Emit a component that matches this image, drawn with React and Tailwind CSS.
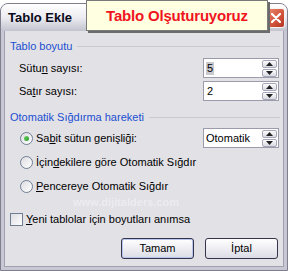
import React from "react";

const Spinner = () => (
  <div className="flex flex-col gap-[1px] w-[15px] mr-[1px]">
    {["up", "down"].map((dir) => (
      <div
        key={dir}
        className="h-[8px] flex items-center justify-center border border-[#a7a7b7] rounded-[2px] bg-gradient-to-b from-[#fdfdfe] to-[#d9d9e2]"
      >
        <svg width="7" height="4" viewBox="0 0 7 4">
          {dir === "up" ? (
            <path d="M0 4 L3.5 0 L7 4 Z" fill="#222" />
          ) : (
            <path d="M0 0 L3.5 4 L7 0 Z" fill="#222" />
          )}
        </svg>
      </div>
    ))}
  </div>
);

const Field = ({ children }) => (
  <div className="ml-auto w-[76px] h-[20px] flex items-center border border-[#9b9bab] bg-white pl-[2px]">
    <div className="flex-1 flex items-center">{children}</div>
    <Spinner />
  </div>
);

const Radio = ({ checked }) => (
  <div className="w-[13px] h-[13px] rounded-full border border-[#6f7f93] bg-gradient-to-br from-[#dcdce2] to-[#ffffff] flex items-center justify-center">
    {checked && (
      <div className="w-[5px] h-[5px] rounded-full bg-gradient-to-br from-[#6ed66e] to-[#1f9a1f]" />
    )}
  </div>
);

const GroupTitle = ({ children }) => (
  <div className="flex items-center h-[13px] pr-[3px]">
    <span className="text-[#1b4fd0]">{children}</span>
    <div className="flex-1 h-px bg-[#c9c9cf] ml-[5px]" />
  </div>
);

export default function App() {
  return (
    <div className="w-[288px] h-[271px] bg-white pt-[3px] relative overflow-hidden font-['Liberation_Sans',Arial,sans-serif] text-[11px] text-black leading-[13px]">
      <div className="h-[268px] flex flex-col rounded-t-[8px] border border-[#7e7e8e] bg-[#c8c8d4] overflow-hidden">
        {/* title bar */}
        <div className="h-[27px] flex items-center pl-[7px] pr-[2px] bg-gradient-to-b from-[#ffffff] via-[#ececf1] to-[#c3c3cf]">
          <span className="font-bold text-[13px] text-[#0a0a1a]">Tablo Ekle</span>
          <div className="ml-auto w-[19px] h-[20px] rounded-[3px] border border-[#f4f4f4] bg-gradient-to-br from-[#e88a72] via-[#d65a42] to-[#b6301f] flex items-center justify-center">
            <svg width="10" height="10" viewBox="0 0 10 10">
              <path d="M1 1 L9 9 M9 1 L1 9" stroke="#fff" strokeWidth="2.2" strokeLinecap="round" />
            </svg>
          </div>
        </div>

        {/* body */}
        <div className="relative flex-1 mx-[3px] mb-[3px] border border-t-0 border-[#a1a1b1] bg-[#e2e1e6] pl-[5px] pt-[9px] flex flex-col">
          <GroupTitle>Tablo boyutu</GroupTitle>

          <div className="flex items-center h-[20px] mt-[5px] pl-[9px] pr-[4px]">
            <span>
              Sütu<u>n</u> sayısı:
            </span>
            <Field>
              <span className="bg-[#c8c8cf] px-[1px]">5</span>
            </Field>
          </div>
          <div className="flex items-center h-[20px] mt-[3px] pl-[9px] pr-[4px]">
            <span>
              Sa<u>t</u>ır sayısı:
            </span>
            <Field>
              <span className="px-[1px]">2</span>
            </Field>
          </div>

          <div className="mt-[10px]">
            <GroupTitle>Otomatik Sığdırma hareketi</GroupTitle>
          </div>

          <div className="flex items-center h-[20px] mt-[4px] pl-[10px] pr-[4px]">
            <Radio checked />
            <span className="ml-[3px]">
              Sa<u>b</u>it sütun genişliği:
            </span>
            <Field>
              <span>Otomatik</span>
            </Field>
          </div>
          <div className="flex items-center h-[20px] mt-[4px] pl-[10px]">
            <Radio />
            <span className="ml-[3px]">
              İçin<u>d</u>ekilere göre Otomatik Sığdır
            </span>
          </div>
          <div className="flex items-center h-[20px] mt-[4px] pl-[10px]">
            <Radio />
            <span className="ml-[3px]">
              <u>P</u>encereye Otomatik Sığdır
            </span>
          </div>

          <div className="flex items-center h-[14px] mt-[16px]">
            <div className="w-[13px] h-[13px] border border-[#6f7f93] bg-gradient-to-br from-[#dcdce2] to-[#ffffff]" />
            <span className="ml-[3px]">
              <u>Y</u>eni tablolar için boyutları anımsa
            </span>
          </div>

          <div className="flex justify-end gap-[11px] mt-[12px] pr-[5px]">
            <button className="w-[73px] h-[21px] rounded-[3px] border border-[#34344a] bg-gradient-to-b from-[#ffffff] to-[#dcdce6] shadow-[inset_0_0_0_1px_#b8c6ef]">
              Tamam
            </button>
            <button className="w-[73px] h-[21px] rounded-[3px] border border-[#34344a] bg-gradient-to-b from-[#ffffff] to-[#dcdce6]">
              İptal
            </button>
          </div>

          <span className="absolute left-[68px] top-[166px] text-[11px] leading-[11px] font-bold text-white/40">
            www.dijitalders.com
          </span>
        </div>
      </div>

      {/* callout */}
      <div className="absolute left-[86px] top-0 w-[182px] h-[31px] border border-[#7a7a7a] bg-[#ffffe1] shadow-[2px_2px_0_#6b6b6b] flex items-center justify-center">
        <span className="text-[15px] font-bold text-[#f0141e] tracking-[-0.2px]">
          Tablo Olşuturuyoruz
        </span>
      </div>
    </div>
  );
}
